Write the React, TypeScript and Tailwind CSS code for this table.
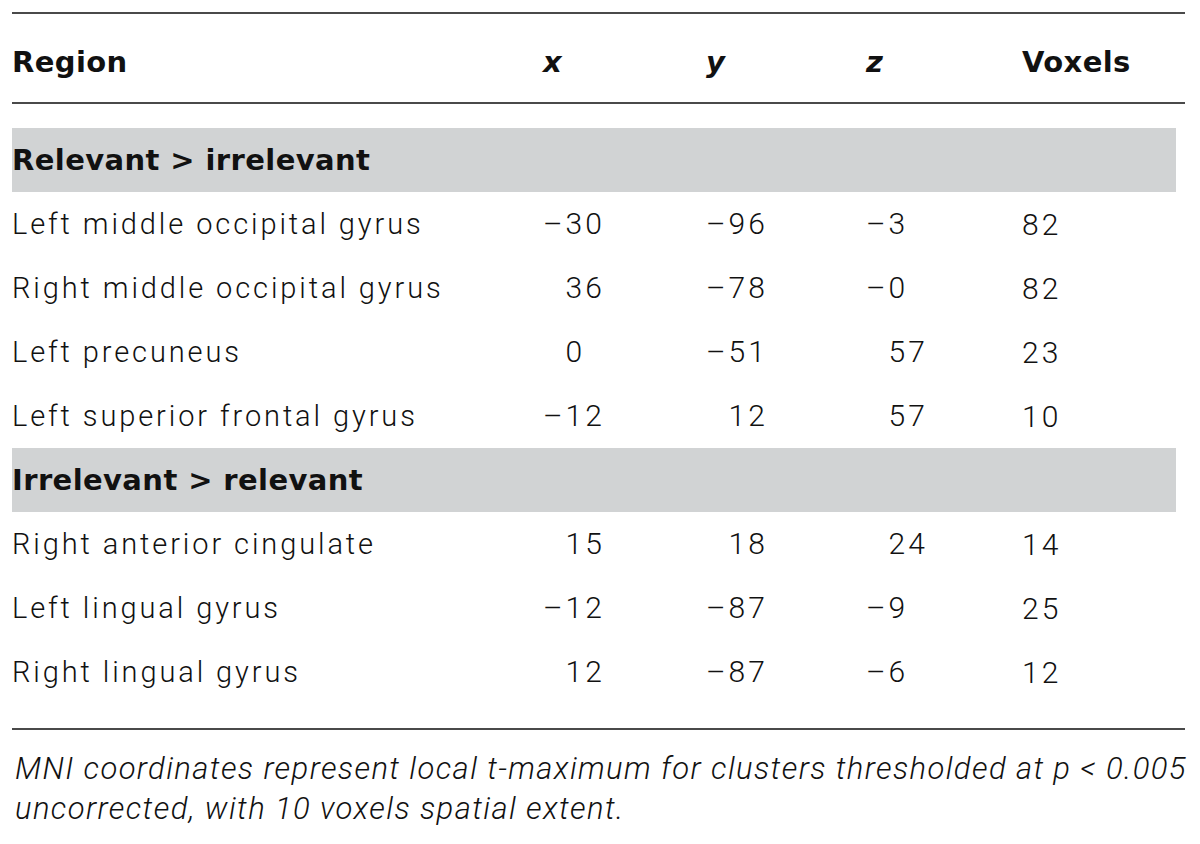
import React from 'react';

type Row = { region: string; x: string; y: string; z: string; voxels: string };
type Section = { title: string; rows: Row[] };

const SECTIONS: Section[] = [
  {
    title: 'Relevant > irrelevant',
    rows: [
      { region: 'Left middle occipital gyrus', x: '–30', y: '–96', z: '–3', voxels: '82' },
      { region: 'Right middle occipital gyrus', x: '36', y: '–78', z: '–0', voxels: '82' },
      { region: 'Left precuneus', x: '0', y: '–51', z: '57', voxels: '23' },
      { region: 'Left superior frontal gyrus', x: '–12', y: '12', z: '57', voxels: '10' },
    ],
  },
  {
    title: 'Irrelevant > relevant',
    rows: [
      { region: 'Right anterior cingulate', x: '15', y: '18', z: '24', voxels: '14' },
      { region: 'Left lingual gyrus', x: '–12', y: '–87', z: '–9', voxels: '25' },
      { region: 'Right lingual gyrus', x: '12', y: '–87', z: '–6', voxels: '12' },
    ],
  },
];

const cols = 'grid grid-cols-[531px_163px_160px_156px_1fr]';
const bold = "font-['DejaVu_Sans'] font-bold text-[29px] leading-[29px] tracking-[0.4px]";
const light = "font-['Roboto'] font-light text-[29px] leading-[29px] tracking-[2.9px]";
const num = 'text-[30px] tracking-[3px]';

// coordinates keep the digits lined up by reserving the width of the minus sign
const Coord = ({ value }: { value: string }) =>
  value.startsWith('–') ? (
    <span className={num}>{value}</span>
  ) : (
    <span className={num}>
      <span className="invisible">–</span>
      {value}
    </span>
  );

export default function App() {
  return (
    <div className="min-h-screen bg-white text-[#111] pt-[12px] pl-[12px]">
      <div className="w-[1173px]">
        <div className="h-[2px] bg-[#4a4a4a]" />

        {/* Header */}
        <div className={`${cols} ${bold} h-[88px] pt-[8px] items-center`}>
          <div>Region</div>
          <div className="italic">x</div>
          <div className="italic">y</div>
          <div className="italic">z</div>
          <div>Voxels</div>
        </div>
        <div className="h-[2px] bg-[#4a4a4a]" />

        <div className="pt-[24px] pb-[24px]">
          {SECTIONS.map((section) => (
            <div key={section.title}>
              <div className={`w-[1164px] h-[64px] bg-[#d1d3d4] flex items-center ${bold}`}>
                {section.title}
              </div>
              {section.rows.map((row) => (
                <div key={row.region} className={`${cols} ${light} h-[64px] items-center`}>
                  <div className="whitespace-nowrap">{row.region}</div>
                  <div><Coord value={row.x} /></div>
                  <div><Coord value={row.y} /></div>
                  <div><Coord value={row.z} /></div>
                  <div className={num}>{row.voxels}</div>
                </div>
              ))}
            </div>
          ))}
        </div>

        <div className="h-[2px] bg-[#4a4a4a]" />

        {/* Footnote */}
        <p className="mt-[19px] pl-[3px] font-['Roboto'] font-light italic text-[31px] leading-[40px] tracking-[1.4px] whitespace-nowrap">
          MNI coordinates represent local t-maximum for clusters thresholded at p &lt; 0.005
          <br />
          uncorrected, with 10 voxels spatial extent.
        </p>
      </div>
    </div>
  );
}
